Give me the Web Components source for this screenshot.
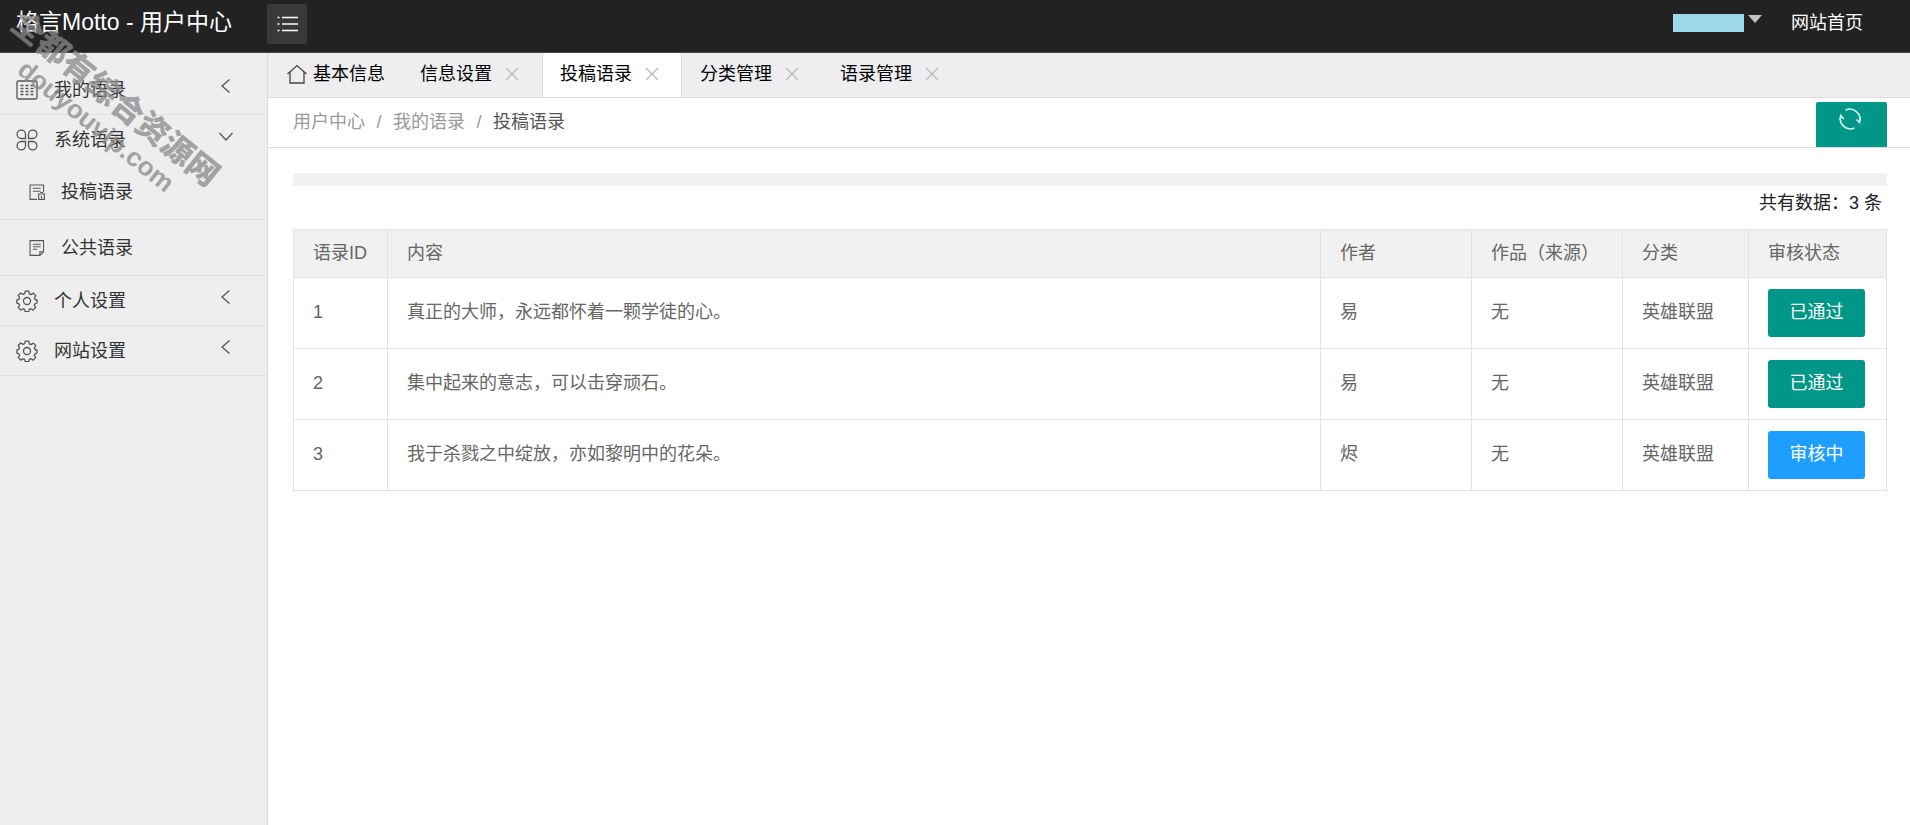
<!DOCTYPE html>
<html lang="zh-CN">
<head>
<meta charset="utf-8">
<meta name="viewport" content="width=device-width, initial-scale=1">
<title>格言Motto - 用户中心</title>
<style>
  html, body { margin: 0; height: 100%; }
  body {
    font: 400 18px/24px "Liberation Sans", "Noto Sans CJK SC", sans-serif;
    color: #333;
    background: #fff;
  }
</style>
</head>
<body>
<motto-app></motto-app>

<script>
const ICONS = {
  list: '<path d="M6 4.500h16M6 11h16M6 17.500h16"/><path d="M1.500 4.500h2M1.500 11h2M1.500 17.500h2"/>',
  grid: '<rect x="1" y="2" width="20" height="18" rx="1.500"/><path d="M4.500 6.500h3M9.500 6.500h3M14.500 6.500h3M4.500 9.500h3M9.500 9.500h3M14.500 9.500h3M4.500 12.500h3M9.500 12.500h3M14.500 12.500h3M4.500 15.500h3M9.500 15.500h3M14.500 15.500h3"/>',
  clover: '<path d="M9.500 9.500H5.200a4.200 4.200 0 1 1 4.300-4.300zM12.500 9.500V5.200a4.200 4.200 0 1 1 4.300 4.300zM9.500 12.500v4.300a4.200 4.200 0 1 1-4.300-4.300zM12.500 12.500h4.300a4.200 4.200 0 1 1-4.300 4.300z"/>',
  gear: '<circle cx="11" cy="11" r="3.500"/><path d="M9.200 1.200h3.600l.6 2.700 1.500.7 2.400-1.500 2.500 2.500-1.500 2.400.7 1.500 2 .5v3l-2 .8-.7 1.500 1.300 2.300-2.500 2.500-2.300-1.400-1.500.7-.6 2.300H9.200l-.6-2.300-1.500-.7-2.300 1.400-2.500-2.500 1.300-2.300-.7-1.500-2-.6v-3.400l2-.5.7-1.500-1.400-2.300 2.500-2.500 2.400 1.400 1.500-.7z" stroke-linejoin="round"/>',
  docBin: '<path d="M11 20H2.500V2.500h16.500V11M6 6.500h9.500M6 10h9.500M12 13.500h9M13 13.500v6.500h7v-6.500M15 11.500h3.500M16.500 15.500v3"/>',
  docFold: '<path d="M14.500 20H2.500V2h16.500v13.500zM14.500 20V15.500h4.500M6 6.500h9.500M6 9.500h9.500M6 12.500h5"/>',
  left: '<path d="M14.500 4.500L7 11l7.500 6.500"/>',
  down: '<path d="M4.500 8l6.500 7L17.500 8"/>',
  home: '<path d="M1.500 11L11 2.500l9.500 8.500M4 9v11h14V9"/>',
  close: '<path d="M5 5l12 12M17 5L5 17"/>',
  refresh: '<path d="M6.500 2.200a10 10 0 0 1 14 11.800M15.500 20A10 10 0 0 1 1.800 8M17.500 11.500l3 3 1-4.500M.8 11.500l1-4 3 3.500"/>'
};

function shadowFrom(el, html) {
  const template = document.createElement('template');
  template.innerHTML = html;
  el.attachShadow({ mode: 'open' }).append(template.content.cloneNode(true));
}

function define(name, html, setup) {
  customElements.define(name, class extends HTMLElement {
    constructor() {
      super();
      shadowFrom(this, html);
    }
    connectedCallback() { if (setup) setup(this, this.shadowRoot); }
  });
}

/* Line icon; takes its colour from the text around it */
customElements.define('ui-icon', class extends HTMLElement {
  static observedAttributes = ['name'];
  constructor() {
    super();
    shadowFrom(this, `
      <style>
        :host { display: inline-block; flex: none; width: 22px; height: 22px; }
        svg { display: block; width: 100%; height: 100%; fill: none; stroke: currentColor; stroke-width: var(--stroke, 1.3); }
      </style>
      <svg viewBox="0 0 22 22" aria-hidden="true"></svg>`);
  }
  attributeChangedCallback(attr, before, name) {
    this.shadowRoot.querySelector('svg').innerHTML = ICONS[name] || '';
  }
});

define('app-header', `
  <style>
    :host { display: flex; align-items: flex-start; box-sizing: border-box; height: 53px; border-bottom: 1px solid #4a4648; background: #222; color: #fff; }
    h1 { box-sizing: border-box; width: 267px; margin: 0; padding: 4px 0 0 16px; font-size: 23px; line-height: 36px; font-weight: 400; white-space: nowrap; }
    button { border: 0; font: inherit; color: inherit; }
    .toggle { display: grid; place-items: center; width: 40px; height: 40px; margin-top: 4px; padding: 0; border-radius: 3px; background: #393939; }
    nav { display: flex; align-items: center; height: 46px; margin-left: auto; padding-right: 47px; }
    .user { display: flex; align-items: flex-start; gap: 4px; margin-right: 29px; padding: 0; background: none; }
    .name { width: 71px; height: 18px; background: #9bd9e8; }
    .caret { margin-top: 1px; border: 7px solid transparent; border-top: 8px solid #c2c2c2; border-bottom: 0; }
    a { color: inherit; text-decoration: none; }
  </style>
  <h1>格言Motto - 用户中心</h1>
  <button class="toggle" aria-label="菜单"><ui-icon name="list" style="--stroke:1.6"></ui-icon></button>
  <nav>
    <button class="user" aria-label="账户"><span class="name"></span><span class="caret"></span></button>
    <a href="#">网站首页</a>
  </nav>`);

define('nav-item', `
  <style>
    :host { display: block; border-bottom: 1px solid #e1e1e1; }
    :host([open]) { border-bottom: 0; }
    a { display: flex; align-items: center; height: 49px; padding: 0 30px 0 16px; gap: 16px; color: #333; text-decoration: none; }
    ui-icon { color: #555; }
    .arrow { margin: 0 0 8px auto; }
    :host([sub]) a { height: 55px; padding-left: 28px; gap: 15px; }
    :host([sub]) .icon { width: 18px; height: 18px; }
    :host([sub]) .arrow { display: none; }
  </style>
  <a href="#"><ui-icon class="icon"></ui-icon><slot></slot><ui-icon class="arrow"></ui-icon></a>`,
  (el, root) => {
    root.querySelector('.icon').setAttribute('name', el.getAttribute('icon'));
    root.querySelector('.arrow').setAttribute('name', el.hasAttribute('open') ? 'down' : 'left');
  });

define('side-nav', `
  <style>
    :host { display: block; box-sizing: border-box; padding-top: 12px; background: #eee; border-right: 1px solid #ddd; }
  </style>
  <nav>
    <nav-item icon="grid">我的语录</nav-item>
    <nav-item icon="clover" open>系统语录</nav-item>
    <nav-item icon="docBin" sub>投稿语录</nav-item>
    <nav-item icon="docFold" sub>公共语录</nav-item>
    <nav-item icon="gear">个人设置</nav-item>
    <nav-item icon="gear">网站设置</nav-item>
  </nav>`);

define('tab-item', `
  <style>
    :host { display: flex; align-items: center; box-sizing: border-box; width: 140px; height: 44px; padding: 0 0 2px 18px; color: #000; }
    :host([active]) { background: #fff; box-shadow: inset 1px 0 #ddd, inset -1px 0 #ddd; }
    :host([home]) { width: 134px; }
    button { padding: 0; border: 0; background: none; font: inherit; color: inherit; white-space: nowrap; }
    .home { display: none; margin-right: 5px; color: #444; }
    .close { display: grid; place-items: center; margin-left: 9px; color: #bbb; }
    :host([home]) .home { display: block; }
    :host([home]) .close { display: none; }
  </style>
  <ui-icon class="home" name="home"></ui-icon>
  <button role="tab"><slot></slot></button>
  <button class="close" aria-label="关闭"><ui-icon name="close"></ui-icon></button>`,
  (el, root) => root.querySelector('[role=tab]').setAttribute('aria-selected', el.hasAttribute('active')));

define('tab-bar', `
  <style>
    :host { display: flex; background: #eeeef0; border-bottom: 1px solid #ddd; }
  </style>
  <tab-item home>基本信息</tab-item>
  <tab-item>信息设置</tab-item>
  <tab-item active>投稿语录</tab-item>
  <tab-item>分类管理</tab-item>
  <tab-item>语录管理</tab-item>`);

define('crumb-bar', `
  <style>
    :host { display: flex; justify-content: space-between; align-items: flex-end; height: 49px; padding: 0 23px 0 25px; border-bottom: 1px solid #ddd; }
    ol { display: flex; align-self: center; margin: 0; padding: 0 0 2px; list-style: none; color: #999; }
    li + li::before { content: "/"; display: inline-block; width: 28px; text-align: center; }
    a { color: inherit; text-decoration: none; }
    [aria-current] { color: #555; }
    button { display: flex; justify-content: center; align-items: flex-start; width: 71px; height: 45px; padding: 6px 4px 0 0; border: 0; border-radius: 2px 2px 0 0; background: #009688; color: #d5fffb; }
  </style>
  <ol>
    <li><a href="#">用户中心</a></li>
    <li><a href="#">我的语录</a></li>
    <li><a href="#" aria-current="page">投稿语录</a></li>
  </ol>
  <button aria-label="刷新"><ui-icon name="refresh" style="--stroke:1.6"></ui-icon></button>`);

define('status-button', `
  <style>
    :host { display: block; }
    button { display: block; width: 97px; height: 48px; padding: 0 0 3px; border: 0; border-radius: 3px; background: #009688; color: #fff; font: inherit; }
    :host([pending]) button { background: #1e9fff; }
  </style>
  <button><slot></slot></button>`);

define('quote-table', `
  <style>
    :host { display: block; padding: 25px 23px 25px 25px; }
    .strip { height: 13px; background: #f1f1f1; }
    p { margin: 0; padding: 5px 5px 14px; text-align: right; color: #222; }
    table { width: 100%; border-collapse: collapse; table-layout: fixed; color: #666; }
    th, td { box-sizing: border-box; padding: 0 19px; border: 1px solid #e2e2e2; text-align: left; font-weight: 400; white-space: nowrap; }
    th { height: 48px; padding-bottom: 1px; background: #f1f1f1; }
    td { height: 71px; }
    td:not(:last-child) { padding-bottom: 2px; }
    .id { width: 94px; } .by { width: 151px; } .kind { width: 126px; } .state { width: 138px; }
  </style>
  <div class="strip"></div>
  <p>共有数据：3 条</p>
  <table>
    <thead><tr><th class="id">语录ID</th><th>内容</th><th class="by">作者</th><th class="by">作品（来源）</th><th class="kind">分类</th><th class="state">审核状态</th></tr></thead>
    <tbody>
      <tr><td>1</td><td>真正的大师，永远都怀着一颗学徒的心。</td><td>易</td><td>无</td><td>英雄联盟</td><td><status-button>已通过</status-button></td></tr>
      <tr><td>2</td><td>集中起来的意志，可以击穿顽石。</td><td>易</td><td>无</td><td>英雄联盟</td><td><status-button>已通过</status-button></td></tr>
      <tr><td>3</td><td>我于杀戮之中绽放，亦如黎明中的花朵。</td><td>烬</td><td>无</td><td>英雄联盟</td><td><status-button pending>审核中</status-button></td></tr>
    </tbody>
  </table>`);

/* Diagonal site mark laid over the corner of the page */
define('site-mark', `
  <style>
    :host { position: absolute; left: 26px; top: 6px; transform: rotate(39deg); transform-origin: 0 0; pointer-events: none; color: rgba(137, 137, 137, .76); font-weight: 900; line-height: 33px; white-space: nowrap; }
    .name { font-size: 32px; }
    .site { padding-left: 34px; font-size: 26px; }
  </style>
  <div class="name">全都有综合资源网</div>
  <div class="site">douyouvip.com</div>`);

define('motto-app', `
  <style>
    :host { display: grid; grid-template: auto 1fr / 268px 1fr; min-height: 100%; position: relative; }
    app-header { grid-column: 1 / -1; }
    main { min-width: 0; }
  </style>
  <app-header></app-header>
  <side-nav></side-nav>
  <main>
    <tab-bar role="tablist"></tab-bar>
    <crumb-bar></crumb-bar>
    <quote-table></quote-table>
  </main>
  <site-mark></site-mark>`);
</script>
</body>
</html>
